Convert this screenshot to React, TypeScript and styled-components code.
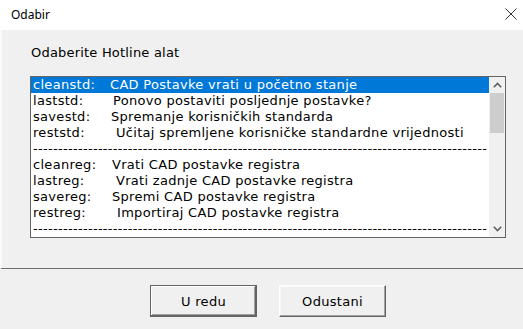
import styled, { createGlobalStyle } from 'styled-components';

const GlobalStyle = createGlobalStyle`
  html, body {
    margin: 0;
    padding: 0;
    background: #f0f0f0;
  }
`;

type Item = { key: string; desc: string; indent: number };

const items: (Item | null)[] = [
  { key: 'cleanstd:', desc: 'CAD Postavke vrati u početno stanje', indent: 77 },
  { key: 'laststd:', desc: 'Ponovo postaviti posljednje postavke?', indent: 80 },
  { key: 'savestd:', desc: 'Spremanje korisničkih standarda', indent: 78 },
  { key: 'reststd:', desc: 'Učitaj spremljene korisničke standardne vrijednosti', indent: 83 },
  null,
  { key: 'cleanreg:', desc: 'Vrati CAD postavke registra', indent: 79 },
  { key: 'lastreg:', desc: 'Vrati zadnje CAD postavke registra', indent: 83 },
  { key: 'savereg:', desc: 'Spremi CAD postavke registra', indent: 79 },
  { key: 'restreg:', desc: 'Importiraj CAD postavke registra', indent: 84 },
  null,
];

const DASHES = '-'.repeat(91);

export default function App() {
  return (
    <>
      <GlobalStyle />
      <Window>
        <TitleBar>
          <Title>Odabir</Title>
          <CloseButton>
            <svg width="12" height="12" viewBox="0 0 12 12">
              <path d="M0.5 0.5 L11.5 11.5 M11.5 0.5 L0.5 11.5" stroke="#333" strokeWidth="1" fill="none" />
            </svg>
          </CloseButton>
        </TitleBar>
        <Body>
          <Label>Odaberite Hotline alat</Label>
          <ListBox>
            <Rows>
              {items.map((it, i) =>
                it ? (
                  <Row key={i} $selected={i === 0}>
                    <Key $width={it.indent}>{it.key}</Key>
                    <span>{it.desc}</span>
                  </Row>
                ) : (
                  <Row key={i}>{DASHES}</Row>
                )
              )}
            </Rows>
            <ScrollBar>
              <Arrow>
                <svg width="9" height="6" viewBox="0 0 9 6">
                  <path d="M0.8 5.2 L4.5 1.5 L8.2 5.2" stroke="#606060" strokeWidth="1.6" fill="none" />
                </svg>
              </Arrow>
              <Track>
                <Thumb />
              </Track>
              <Arrow>
                <svg width="9" height="6" viewBox="0 0 9 6">
                  <path d="M0.8 0.8 L4.5 4.5 L8.2 0.8" stroke="#606060" strokeWidth="1.6" fill="none" />
                </svg>
              </Arrow>
            </ScrollBar>
          </ListBox>
        </Body>
        <Footer>
          <Button $default>U redu</Button>
          <Button>Odustani</Button>
        </Footer>
      </Window>
    </>
  );
}

const Window = styled.div`
  width: 523px;
  height: 329px;
  display: flex;
  flex-direction: column;
  background: #f0f0f0;
  overflow: hidden;
  font-family: 'DejaVu Sans', Verdana, sans-serif;
  font-size: 13px;
  letter-spacing: 0.3px;
  color: #000;
`;

const TitleBar = styled.div`
  height: 30px;
  flex: none;
  background: #fff;
  display: flex;
  align-items: center;
  justify-content: space-between;
  padding: 0 6px 0 11px;
`;

const Title = styled.span`
  font-family: 'Noto Sans', 'Open Sans', sans-serif;
  font-size: 12px;
  letter-spacing: 0;
  margin-top: -1px;
`;

const CloseButton = styled.div`
  width: 12px;
  height: 12px;
  display: flex;
  margin-top: -2px;
`;

const Body = styled.div`
  height: 239px;
  flex: none;
  border-left: 2px solid #fafafa;
  border-bottom: 1px solid #6d6d6d;
  padding: 15px 0 0 28px;
  box-sizing: border-box;
`;

const Label = styled.div`
  height: 16px;
  line-height: 16px;
  padding-left: 1px;
  letter-spacing: 0.2px;
`;

const ListBox = styled.div`
  margin-top: 15px;
  width: 476px;
  height: 162px;
  box-sizing: border-box;
  border: 1px solid #646464;
  background: #fff;
  display: flex;
`;

const Rows = styled.div`
  flex: 1;
  min-width: 0;
  overflow: hidden;
`;

const Row = styled.div<{ $selected?: boolean }>`
  height: 16px;
  line-height: 16px;
  padding-left: 2px;
  white-space: pre;
  overflow: hidden;
  display: flex;
  background: ${(p) => (p.$selected ? '#0078d7' : 'transparent')};
  color: ${(p) => (p.$selected ? '#fff' : '#000')};
`;

const Key = styled.span<{ $width: number }>`
  flex: none;
  width: ${(p) => p.$width}px;
`;

const ScrollBar = styled.div`
  width: 16px;
  flex: none;
  background: #f0f0f0;
  display: flex;
  flex-direction: column;
`;

const Arrow = styled.div`
  height: 16px;
  flex: none;
  display: flex;
  align-items: center;
  justify-content: center;
`;

const Track = styled.div`
  flex: 1;
  padding: 0 1px;
`;

const Thumb = styled.div`
  height: 40px;
  background: #cdcdcd;
`;

const Footer = styled.div`
  flex: 1;
  display: flex;
  align-items: flex-start;
  gap: 22px;
  padding: 16px 0 0 150px;
`;

const Button = styled.div<{ $default?: boolean }>`
  width: 107px;
  height: 32px;
  box-sizing: border-box;
  display: flex;
  align-items: center;
  justify-content: center;
  background: #f0f0f0;
  font-size: 13px;
  border: 1px solid;
  border-color: ${(p) => (p.$default ? '#646464' : '#fff #646464 #646464 #fff')};
  box-shadow: ${(p) =>
    p.$default
      ? 'inset -1px -1px 0 #646464, inset 1px 1px 0 #fff, inset -2px -2px 0 #a0a0a0'
      : 'inset -1px -1px 0 #a0a0a0, inset 1px 1px 0 #f8f8f8'};
`;
